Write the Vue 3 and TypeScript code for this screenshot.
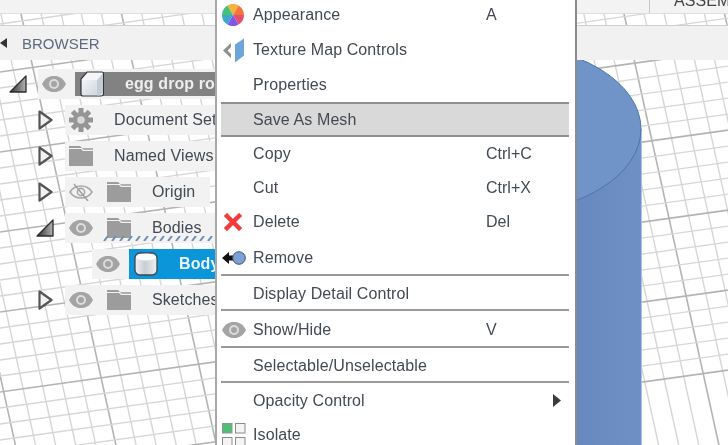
<template>
  <div class="app">
    <svg class="canvas" width="728" height="445" viewBox="0 0 728 445">
      <defs>
        <linearGradient id="sideGrad" x1="0" y1="0" x2="1" y2="0">
          <stop offset="0" stop-color="#668ac0" />
          <stop offset="0.5" stop-color="#6688be" />
          <stop offset="1" stop-color="#6e90c4" />
        </linearGradient>
      </defs>
      <line
        v-for="(l, i) in gridLines"
        :key="i"
        :x1="l.x1"
        :y1="l.y1"
        :x2="l.x2"
        :y2="l.y2"
        :stroke="l.major ? '#b4b4b4' : '#d6d6d6'"
        :stroke-width="l.major ? 1.6 : 1.4"
      />
      <rect x="500" y="129" width="141" height="330" fill="url(#sideGrad)" />
      <line x1="641.5" y1="129" x2="641.5" y2="445" stroke="#a9c3e8" />
      <ellipse cx="500" cy="129" rx="141" ry="85" fill="#7093c8" stroke="#4f75aa" stroke-width="1" />
    </svg>

    <svg width="0" height="0" class="defs">
      <defs>
        <linearGradient id="triGrad" x1="0" y1="0" x2="1" y2="0">
          <stop offset="0" stop-color="#2e2e2e" />
          <stop offset="1" stop-color="#b4b4b4" />
        </linearGradient>
        <linearGradient id="cubeGrad" x1="0" y1="0" x2="1" y2="1">
          <stop offset="0" stop-color="#f2f5f9" />
          <stop offset="1" stop-color="#cfd6e0" />
        </linearGradient>
        <linearGradient id="cylGrad" x1="0" y1="0" x2="1" y2="0">
          <stop offset="0" stop-color="#f0f1f3" />
          <stop offset="0.45" stop-color="#c9ced4" />
          <stop offset="1" stop-color="#eef0f2" />
        </linearGradient>
        <symbol id="i-eye" viewBox="0 0 24 16">
          <path d="M0 8C5 -3 19 -3 24 8C19 19 5 19 0 8Z" fill="#a4a4a4" />
          <circle cx="12" cy="8" r="5" fill="#dcdcdc" />
          <circle cx="12" cy="8" r="3" fill="#a4a4a4" />
        </symbol>
        <symbol id="i-eye-off" viewBox="0 0 24 18">
          <path d="M1 9C6 1 18 1 23 9C18 17 6 17 1 9Z" fill="none" stroke="#a8a8a8" stroke-width="1.6" />
          <circle cx="12" cy="9" r="3.6" fill="none" stroke="#a8a8a8" stroke-width="1.6" />
          <line x1="5" y1="1" x2="19" y2="18" stroke="#a0a0a0" stroke-width="1.5" />
        </symbol>
        <symbol id="i-folder" viewBox="0 0 24 20">
          <path d="M0 0H11L13 2H0Z" fill="#9c9c9c" />
          <path d="M0 3H12L14 5H24V20H0Z" fill="#9c9c9c" />
          <path d="M13 2H24V4H14.500Z" fill="#b0b0b0" />
        </symbol>
        <symbol id="i-gear" viewBox="0 0 24 24">
          <g stroke="#959595" stroke-width="5">
            <line x1="12" y1="0" x2="12" y2="24" />
            <line x1="0" y1="12" x2="24" y2="12" />
            <line x1="3.500" y1="3.500" x2="20.500" y2="20.500" />
            <line x1="20.500" y1="3.500" x2="3.500" y2="20.500" />
          </g>
          <circle cx="12" cy="12" r="8" fill="#959595" />
          <circle cx="12" cy="12" r="3.800" fill="#d8d8d8" />
        </symbol>
        <symbol id="i-cube" viewBox="0 0 24 26">
          <path d="M7 1H22C23 1 23.500 2 23.500 3V23C23.500 24.500 22.500 25 21 25H3C1.500 25 1 24 1 23V8Z" fill="#f4f6f9" stroke="#333" stroke-width="1.200" />
          <path d="M2 9H17V24H3C2.500 24 2 23.500 2 23Z" fill="url(#cubeGrad)" />
          <path d="M17 9L23 2V22L19 24.500H17Z" fill="#c6ccd6" />
        </symbol>
        <symbol id="i-cyl" viewBox="0 0 24 24">
          <rect x="1" y="1" width="22" height="22" rx="5" fill="url(#cylGrad)" stroke="#3f4650" stroke-width="1.300" />
          <ellipse cx="12" cy="5" rx="10" ry="3.500" fill="#fbfbfb" />
        </symbol>
      </defs>
    </svg>

    <div class="topbar">
      <span class="top-tab">ASSEMBLE</span>
    </div>

    <div class="browser-head">
      <svg class="head-arrow" width="7" height="10" viewBox="0 0 7 10"><path d="M7 0V10L0 5Z" fill="#333" /></svg>
      <span class="head-title">BROWSER</span>
    </div>

    <div class="tree">
      <div v-for="row in treeRows" :key="row.label" class="tree-row" :class="'lvl' + row.level">
        <span class="toggle">
          <svg v-if="row.toggle === 'closed'" width="15" height="20" viewBox="0 0 15 20">
            <path d="M1.500 1.500L13.500 10L1.500 18.500Z" fill="#f1f1f1" stroke="#555" stroke-width="2.200" stroke-linejoin="round" />
          </svg>
          <svg v-else-if="row.toggle === 'open'" class="toggle-open" width="18" height="18" viewBox="0 0 18 18">
            <path d="M1 17L17 1V17Z" fill="url(#triGrad)" stroke="#2c2c2c" stroke-width="1.300" stroke-linejoin="round" />
          </svg>
        </span>
        <div class="row-body" :class="{ 'has-label': row.style }">
          <span class="eye-cell">
            <svg v-if="row.lead === 'gear'" width="24" height="24"><use href="#i-gear" /></svg>
            <svg v-else-if="row.lead === 'folder'" width="24" height="20"><use href="#i-folder" /></svg>
            <svg v-else-if="row.lead === 'eye-off'" width="24" height="18"><use href="#i-eye-off" /></svg>
            <svg v-else width="24" height="16"><use href="#i-eye" /></svg>
          </span>
          <div class="row-main" :class="row.style">
            <span v-if="row.icon" class="icon-cell">
              <svg v-if="row.icon === 'cube'" width="24" height="26"><use href="#i-cube" /></svg>
              <svg v-else-if="row.icon === 'cyl'" width="24" height="24"><use href="#i-cyl" /></svg>
              <svg v-else width="24" height="20"><use href="#i-folder" /></svg>
            </span>
            <span class="row-label" :class="{ plain: !row.icon }">{{ row.label }}</span>
          </div>
          <svg v-if="row.drop" class="drop-line" width="130" height="5">
            <path d="M1 5L5 0M9 5L13 0M17 5L21 0M25 5L29 0M33 5L37 0M41 5L45 0M49 5L53 0M57 5L61 0M65 5L69 0M73 5L77 0M81 5L85 0M89 5L93 0M97 5L101 0M105 5L109 0M113 5L117 0" stroke="#6a8db5" stroke-width="2" fill="none" />
          </svg>
        </div>
      </div>
    </div>

    <div class="menu">
      <div class="menu-list">
        <div
          v-for="item in menuItems"
          :key="item.label"
          class="menu-item"
          :class="{ active: item.active, sep: item.sep }"
          :style="{ height: item.h + 'px' }"
        >
          <span class="menu-icon">
            <svg v-if="item.icon === 'wheel'" width="22" height="22" viewBox="0 0 22 22">
              <path
                v-for="s in wheel"
                :key="s.color"
                :d="s.d"
                :fill="s.color"
              />
            </svg>
            <svg v-else-if="item.icon === 'texture'" width="23" height="25" viewBox="0 0 23 25">
              <path d="M9 5L1 12.500L9 20V16L5.500 12.500L9 9Z" fill="#8f8f8f" />
              <path d="M13 6.500L22 0.500V17.500L13 24.500Z" fill="#6ba5da" />
            </svg>
            <svg v-else-if="item.icon === 'x'" class="del" width="18" height="18" viewBox="0 0 18 18">
              <path d="M3 3L15 15M15 3L3 15" stroke="#f23c3c" stroke-width="4.500" stroke-linecap="square" />
            </svg>
            <svg v-else-if="item.icon === 'remove'" width="24" height="16" viewBox="0 0 24 16">
              <path d="M0 8L7 2V5.500H12V10.500H7V14Z" fill="#111" />
              <circle cx="17" cy="8" r="6.300" fill="#7aa0d6" stroke="#44536a" stroke-width="1" />
            </svg>
            <svg v-else-if="item.icon === 'eye'" width="24" height="16"><use href="#i-eye" /></svg>
            <svg v-else-if="item.icon === 'isolate'" class="iso" width="26" height="26" viewBox="0 0 26 26">
              <rect x="1.500" y="1.500" width="9.500" height="9.500" fill="#4fbf78" stroke="#8a9a90" />
              <rect x="14.500" y="1.500" width="9.500" height="9.500" fill="#f4f4f4" stroke="#8c8c8c" />
              <rect x="1.500" y="15.500" width="9.500" height="9.500" fill="#f4f4f4" stroke="#8c8c8c" />
              <rect x="14.500" y="15.500" width="9.500" height="9.500" fill="#f4f4f4" stroke="#8c8c8c" />
            </svg>
          </span>
          <span class="menu-label">{{ item.label }}</span>
          <span v-if="item.key" class="menu-key">{{ item.key }}</span>
          <svg v-if="item.submenu" class="menu-arrow" width="8" height="13" viewBox="0 0 8 13"><path d="M0 0L8 6.500L0 13Z" fill="#3c3c3c" /></svg>
        </div>
      </div>
    </div>
  </div>
</template>

<script setup lang="ts">
interface TreeRow {
  label: string;
  level: 0 | 1 | 2;
  toggle?: 'open' | 'closed';
  lead?: 'gear' | 'folder' | 'eye-off';
  icon?: 'cube' | 'cyl' | 'folder';
  style?: 'dark' | 'blue';
  drop?: boolean;
}

interface MenuItem {
  label: string;
  h: number;
  key?: string;
  icon?: string;
  active?: boolean;
  sep?: boolean;
  submenu?: boolean;
}

const treeRows: TreeRow[] = [
  { label: 'egg drop ro', level: 0, toggle: 'open', icon: 'cube', style: 'dark' },
  { label: 'Document Settings', level: 1, toggle: 'closed', lead: 'gear' },
  { label: 'Named Views', level: 1, toggle: 'closed', lead: 'folder' },
  { label: 'Origin', level: 1, toggle: 'closed', lead: 'eye-off', icon: 'folder' },
  { label: 'Bodies', level: 1, toggle: 'open', icon: 'folder', drop: true },
  { label: 'Body1', level: 2, icon: 'cyl', style: 'blue' },
  { label: 'Sketches', level: 1, toggle: 'closed', icon: 'folder' }
];

const menuItems: MenuItem[] = [
  { label: 'Appearance', h: 34, key: 'A', icon: 'wheel' },
  { label: 'Texture Map Controls', h: 36, icon: 'texture' },
  { label: 'Properties', h: 34 },
  { label: 'Save As Mesh', h: 35, active: true },
  { label: 'Copy', h: 34, key: 'Ctrl+C' },
  { label: 'Cut', h: 33, key: 'Ctrl+X' },
  { label: 'Delete', h: 35, key: 'Del', icon: 'x' },
  { label: 'Remove', h: 37, icon: 'remove', sep: true },
  { label: 'Display Detail Control', h: 35, sep: true },
  { label: 'Show/Hide', h: 37, key: 'V', icon: 'eye', sep: true },
  { label: 'Selectable/Unselectable', h: 35, sep: true },
  { label: 'Opacity Control', h: 35, submenu: true },
  { label: 'Isolate', h: 34, icon: 'isolate' }
];

// sectors of the colour wheel, clockwise from the top left
const wheelColors = ['#f4b13c', '#f2743e', '#e4506e', '#8058e8', '#3fa6d0', '#46c074'];
const wheel = wheelColors.map((color, i) => {
  const step = (Math.PI * 2) / wheelColors.length;
  const a = i * step - (Math.PI * 2) / 3;
  const b = a + step;
  const p = (t: number) => `${(11 + 11 * Math.cos(t)).toFixed(2)} ${(11 + 11 * Math.sin(t)).toFixed(2)}`;
  return { color, d: `M11 11L${p(a)}A11 11 0 0 1 ${p(b)}Z` };
});

// ground grid: slanted lines, every fifth one is heavier
const gridLines: { x1: number; y1: number; x2: number; y2: number; major: boolean }[] = [];
for (let i = -5; i < 45; i++) {
  const x = 18 + i * 20.1;
  gridLines.push({ x1: x, y1: 0, x2: x + 0.22 * 445, y2: 445, major: (i + 100) % 5 === 0 });
}
for (let i = -5; i < 45; i++) {
  const y = 392 - i * 16;
  gridLines.push({ x1: 0, y1: y, x2: 728, y2: y - 0.14 * 728, major: (i + 100) % 5 === 0 });
}
</script>

<style scoped>
.app {
  position: relative;
  width: 728px;
  height: 445px;
  overflow: hidden;
  background: #fff;
  font-family: "Liberation Sans", Arial, sans-serif;
  font-size: 16px;
  letter-spacing: 0.1px;
  color: #434a54;
  filter: blur(0.4px);
}

.canvas {
  position: absolute;
  left: 0;
  top: 0;
}

.defs {
  position: absolute;
}

.topbar {
  position: relative;
  height: 13px;
  background: #f3f3f3;
  border-bottom: 1px solid #dedede;
  overflow: hidden;
  display: flex;
  justify-content: flex-end;
}

.top-tab {
  margin-top: -9px;
  padding-left: 24px;
  width: 54px;
  border-left: 1px solid #c8c8c8;
  white-space: nowrap;
  overflow: hidden;
  color: #444;
  line-height: 20px;
}

.browser-head {
  position: relative;
  height: 34px;
  margin-top: 11px;
  background: #f1f1f1;
  border-top: 1px solid #cfcfcf;
  display: flex;
  align-items: center;
}

.head-arrow {
  margin-right: 15px;
}

.head-title {
  color: #5c6b80;
  font-size: 15px;
  letter-spacing: 0;
}

.tree {
  position: relative;
  display: flex;
  flex-direction: column;
  gap: 6px;
  padding-top: 9px;
}

.tree-row {
  display: flex;
  height: 30px;
}

.lvl0 {
  padding-left: 9px;
}

.lvl1 {
  padding-left: 36px;
}

.lvl2 {
  padding-left: 63px;
}

.toggle {
  width: 29px;
  flex-shrink: 0;
  display: flex;
  align-items: center;
}

.toggle svg {
  margin-left: 2px;
}

.toggle .toggle-open {
  margin-left: 0;
}

.row-body {
  position: relative;
  display: flex;
  align-items: center;
  background: #f2f2f2;
  white-space: nowrap;
}

.eye-cell {
  width: 32px;
  display: flex;
  justify-content: center;
}

.row-main {
  display: flex;
  align-items: center;
  margin-left: 5px;
  padding-right: 15px;
}

.row-main.dark {
  background: #828282;
  color: #eee;
  font-weight: 700;
  height: 24px;
  width: 200px;
}

.row-main.blue {
  background: #0a96d8;
  color: #eef6fc;
  font-weight: 700;
  height: 30px;
  width: 150px;
}

.icon-cell {
  width: 34px;
  display: flex;
  justify-content: center;
}

.row-label {
  margin-left: 16px;
}

.row-label.plain {
  margin-left: 12px;
}

.drop-line {
  position: absolute;
  left: 38px;
  top: 23px;
}

.menu {
  position: absolute;
  left: 215px;
  top: 0;
  width: 348px;
  height: 445px;
  padding: 0 6px 0 4px;
  background: #fff;
  border-left: 2px solid #a8a8a8;
  border-right: 2px solid #8c8c8c;
  overflow: hidden;
}

.menu-list {
  margin-top: -2px;
}

.menu-item {
  position: relative;
  box-sizing: border-box;
  display: flex;
  align-items: center;
  white-space: nowrap;
}

.menu-item.active {
  background: #d9d9d9;
  border-top: 2px solid #8f8f8f;
  border-bottom: 2px solid #8f8f8f;
}

.menu-item.sep {
  padding-top: 2px;
  border-bottom: 2px solid #9a9a9a;
}

.menu-icon {
  width: 32px;
  flex-shrink: 0;
  display: flex;
  align-items: center;
}

.menu-icon svg {
  margin-left: 1px;
}

.menu-icon .iso {
  margin-left: 0;
}

.menu-icon .del {
  margin-left: 3px;
}

.menu-label {
  width: 233px;
  flex-shrink: 0;
}

.menu-key {
  letter-spacing: 0;
}

.menu-arrow {
  margin-left: 67px;
}
</style>

<style>
html,
body {
  margin: 0;
  overflow: hidden;
}
</style>
